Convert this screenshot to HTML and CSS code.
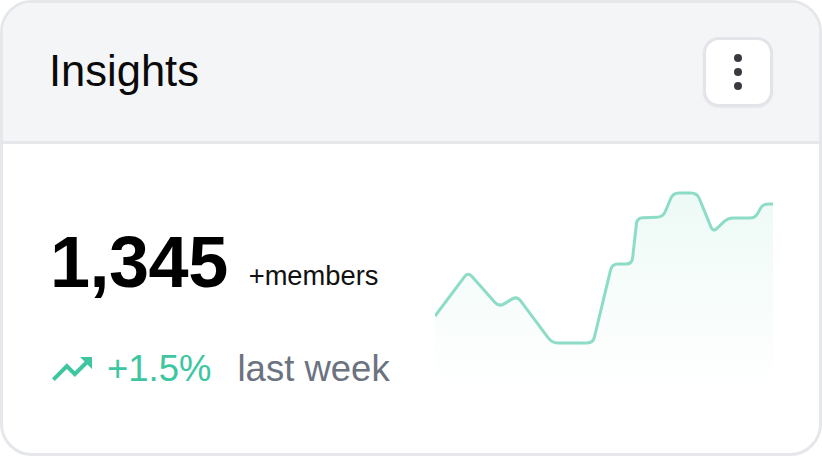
FILE: index.html
```html
<!DOCTYPE html>
<html lang="en">
<head>
<meta charset="utf-8">
<title>Insights</title>
<link rel="stylesheet" href="styles.css">
</head>
<body>
<div class="card">
  <div class="card-header">
    <h2 class="title">Insights</h2>
    <button class="menu-btn" aria-label="More options">
      <svg width="10" height="36" viewBox="0 0 10 36">
        <circle cx="5" cy="4" r="4"/>
        <circle cx="5" cy="18" r="4"/>
        <circle cx="5" cy="32" r="4"/>
      </svg>
    </button>
  </div>
  <div class="card-body">
    <div class="stats">
      <div class="stat-main"><span class="count">1,345</span><span class="unit">+members</span></div>
      <div class="trend">
        <svg class="trend-icon" width="48" height="48" viewBox="0 0 24 24"><path d="M16 6l2.29 2.29-4.88 4.88-4-4L2 16.59 3.41 18l6-6 4 4 6.3-6.29L22 12V6z"/></svg>
        <span class="delta">+1.5%</span>
        <span class="period">last week</span>
      </div>
    </div>
    <svg class="chart" width="338" height="205" viewBox="0 0 338 205">
      <defs>
        <linearGradient id="fillGrad" x1="0" y1="0" x2="0" y2="1">
          <stop offset="0" stop-color="#3ec6a0" stop-opacity="0.09"/>
          <stop offset="1" stop-color="#3ec6a0" stop-opacity="0"/>
        </linearGradient>
      </defs>
      <path class="area" d="M0,131 L29.4,91.8 Q33,87 37,91.5 L60,117.5 Q64,122 69.1,118.9 L76.9,114.1 Q82,111 85.6,115.8 L113.4,153.2 Q117,158 123,158 L152,158 Q158,158 159.4,152.2 L175.6,84.8 Q177,79 183,79 L191,79 Q197,79 197.6,73 L201.4,39 Q202,33 208,32.8 L222,32.2 Q228,32 230.3,26.5 L235.7,13.5 Q238,8 244,8 L256,8 Q262,8 264.3,13.5 L276.1,42.4 Q278,47 281.7,43.6 L289.3,36.4 Q293,33 298,33 L315,33 Q320,33 322.5,28.7 L325.5,23.3 Q328,19 333,19 L338,19 L338,205 L0,205 Z"/>
      <path class="line" d="M0,131 L29.4,91.8 Q33,87 37,91.5 L60,117.5 Q64,122 69.1,118.9 L76.9,114.1 Q82,111 85.6,115.8 L113.4,153.2 Q117,158 123,158 L152,158 Q158,158 159.4,152.2 L175.6,84.8 Q177,79 183,79 L191,79 Q197,79 197.6,73 L201.4,39 Q202,33 208,32.8 L222,32.2 Q228,32 230.3,26.5 L235.7,13.5 Q238,8 244,8 L256,8 Q262,8 264.3,13.5 L276.1,42.4 Q278,47 281.7,43.6 L289.3,36.4 Q293,33 298,33 L315,33 Q320,33 322.5,28.7 L325.5,23.3 Q328,19 333,19 L338,19"/>
    </svg>
  </div>
</div>
</body>
</html>
```
FILE: styles.css
```css
* { box-sizing: border-box; }
html, body { margin: 0; padding: 0; background: #ffffff; }
body { font-family: "Liberation Sans", Arial, Helvetica, sans-serif; }

.card {
  width: 822px;
  height: 456px;
  border: 3px solid #e5e7eb;
  border-radius: 32px;
  overflow: hidden;
  background: #ffffff;
  display: flex;
  flex-direction: column;
}

.card-header {
  height: 141px;
  flex: none;
  background: #f4f5f7;
  border-bottom: 3px solid #e5e7eb;
  display: flex;
  align-items: center;
  justify-content: space-between;
  padding: 0 46px 0 46px;
}

.title {
  margin: 0;
  font-size: 43.5px;
  font-weight: 400;
  color: #0a0a0a;
  line-height: 1;
}

.menu-btn {
  width: 70px;
  height: 70px;
  border: 3px solid #e3e4e9;
  border-radius: 16px;
  background: #ffffff;
  box-shadow: 0 1px 2px rgba(0, 0, 0, 0.06);
  display: flex;
  align-items: center;
  justify-content: center;
  padding: 0;
  fill: #3a3a40;
}

.card-body {
  flex: 1;
  display: flex;
  justify-content: space-between;
  align-items: flex-start;
  padding: 41px 46px 0 46px;
}

.stats {
  display: flex;
  flex-direction: column;
  padding-top: 41px;
  padding-left: 1px;
}

.stat-main {
  line-height: 1;
  white-space: nowrap;
}

.count {
  font-size: 72px;
  font-weight: 700;
  color: #000000;
  letter-spacing: -0.5px;
}

.unit {
  font-size: 27.3px;
  color: #111111;
  margin-left: 21px;
  vertical-align: 2px;
}

.trend {
  display: flex;
  align-items: center;
  height: 48px;
  margin-top: 47px;
  white-space: nowrap;
}

.trend-icon {
  fill: #3ec6a0;
  margin-left: -2px;
  margin-right: 11px;
}

.delta {
  font-size: 36.5px;
  line-height: 48px;
  color: #3ec6a0;
}

.period {
  font-size: 36.5px;
  line-height: 48px;
  color: #6b7280;
  margin-left: 26px;
}

.chart {
  display: block;
  flex: none;
}

.chart .area {
  fill: url(#fillGrad);
  stroke: none;
}

.chart .line {
  fill: none;
  stroke: #8ddcc7;
  stroke-width: 3;
  stroke-linejoin: round;
  stroke-linecap: butt;
}
```
